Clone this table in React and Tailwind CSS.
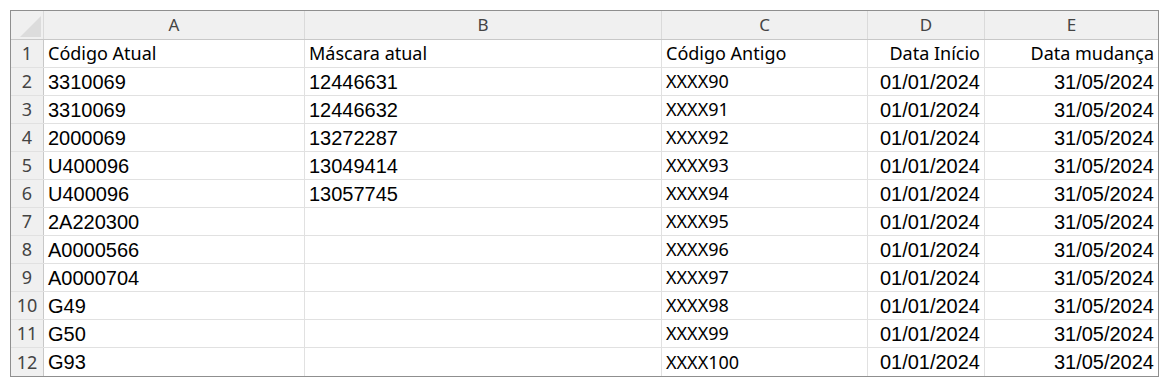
import React from "react";

const rows = [
  ["3310069", "12446631", "XXXX90"],
  ["3310069", "12446632", "XXXX91"],
  ["2000069", "13272287", "XXXX92"],
  ["U400096", "13049414", "XXXX93"],
  ["U400096", "13057745", "XXXX94"],
  ["2A220300", "", "XXXX95"],
  ["A0000566", "", "XXXX96"],
  ["A0000704", "", "XXXX97"],
  ["G49", "", "XXXX98"],
  ["G50", "", "XXXX99"],
  ["G93", "", "XXXX100"],
];

const cols = "grid grid-cols-[33px_261px_357px_206px_117px_173px]";
const hdrFont = "font-['Noto_Sans',sans-serif]";
const arialFont = "font-['Liberation_Sans',Arial,sans-serif]";
const rowNum = `flex items-center justify-center bg-[#f0f0f0] border-r border-[#c8c8c8] text-[#444] text-[18px] ${hdrFont}`;
const cellL = "flex items-center pl-[4px] border-r border-[#e1e1e1] text-black whitespace-nowrap overflow-hidden";
const cellR = "flex items-center justify-end pr-[4px] border-r border-[#e1e1e1] text-black whitespace-nowrap overflow-hidden";

export default function App() {
  return (
    <div className="w-[1169px] h-[388px] bg-white p-[10px]">
      <div className="border border-[#8f8f8f] w-[1149px]">
        <div className={`${cols} h-[29px] bg-[#f0f0f0] border-b border-[#c8c8c8] text-[#444] text-[17px] ${hdrFont}`}>
          <div className="relative border-r border-[#dadada]">
            <svg className="absolute left-[9px] top-[5px]" width="21" height="21" viewBox="0 0 21 21">
              <polygon points="21,0 21,21 0,21" fill="#dcdcdc" />
            </svg>
          </div>
          <div className="flex items-center justify-center border-r border-[#dadada]">A</div>
          <div className="flex items-center justify-center border-r border-[#dadada]">B</div>
          <div className="flex items-center justify-center border-r border-[#dadada]">C</div>
          <div className="flex items-center justify-center border-r border-[#dadada]">D</div>
          <div className="flex items-center justify-center">E</div>
        </div>
        <div className={`${cols} h-[28px] border-b border-[#e1e1e1] text-[18px] ${hdrFont}`}>
          <div className={rowNum}>1</div>
          <div className={cellL}>Código Atual</div>
          <div className={cellL}>Máscara atual</div>
          <div className={cellL}>Código Antigo</div>
          <div className={cellR}>Data Início</div>
          <div className={`${cellR} border-r-0 pr-[3px]`}>Data mudança</div>
        </div>
        {rows.map((r, i) => (
          <div key={i} className={`${cols} h-[28px] ${i < rows.length - 1 ? "border-b border-[#e1e1e1]" : ""}`}>
            <div className={rowNum}>{i + 2}</div>
            <div className={`${cellL} text-[20px] ${arialFont}`}>{r[0]}</div>
            <div className={`${cellL} text-[20px] ${arialFont}`}>{r[1]}</div>
            <div className={`${cellL} text-[18px] ${hdrFont}`}>{r[2]}</div>
            <div className={`${cellR} text-[20px] ${arialFont}`}>01/01/2024</div>
            <div className={`${cellR} border-r-0 pr-[3px] text-[20px] ${arialFont}`}>31/05/2024</div>
          </div>
        ))}
      </div>
    </div>
  );
}
